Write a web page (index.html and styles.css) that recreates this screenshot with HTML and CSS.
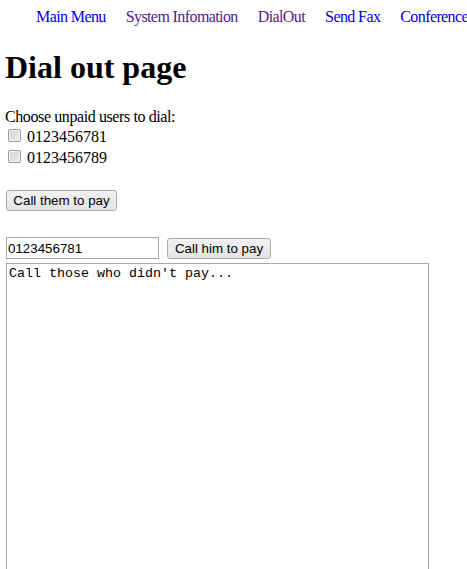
FILE: index.html
```html
<!DOCTYPE html>
<html>
<head>
<meta charset="utf-8">
<title>Dial out page</title>
<link rel="stylesheet" href="styles.css">
</head>
<body>
<nav class="nav">
  <a class="nav-link" href="#">Main Menu</a>
  <a class="nav-link visited" href="#">System Infomation</a>
  <a class="nav-link visited" href="#">DialOut</a>
  <a class="nav-link" href="#">Send Fax</a>
  <a class="nav-link" href="#">Conference</a>
</nav>
<h1 class="title">Dial out page</h1>
<form class="form">
  <div class="prompt">Choose unpaid users to dial:</div>
  <label class="row"><input class="check" type="checkbox"><span class="num">0123456781</span></label>
  <label class="row"><input class="check" type="checkbox"><span class="num">0123456789</span></label>
  <div class="btn-line"><button type="button" class="btn btn-them">Call them to pay</button></div>
  <div class="single">
    <input class="field" type="text" value="0123456781">
    <button type="button" class="btn btn-him">Call him to pay</button>
  </div>
  <textarea class="log">Call those who didn't pay...</textarea>
</form>
</body>
</html>
```
FILE: styles.css
```css
html, body {
  margin: 0;
  padding: 0;
  background: #fff;
  overflow: hidden;
}
body {
  padding-left: 5px;
  font-family: "Liberation Serif", "Times New Roman", serif;
  font-size: 16px;
  color: #000;
}
.nav {
  display: flex;
  gap: 20px;
  padding: 8px 0 0 31px;
  height: 18px;
  line-height: 18px;
  white-space: nowrap;
  overflow: hidden;
  letter-spacing: -0.6px;
}
.nav-link {
  color: #0000ee;
  text-decoration: none;
  flex: none;
}
.nav-link.visited {
  color: #551a8b;
}
.title {
  margin: 23px 0 0 0;
  font-size: 32px;
  line-height: 37px;
  font-weight: bold;
}
.form {
  margin: 21px 0 0 0;
  display: flex;
  flex-direction: column;
  align-items: flex-start;
}
.prompt {
  height: 20px;
  line-height: 20px;
  letter-spacing: -0.4px;
}
.row {
  display: flex;
  align-items: center;
  height: 20px;
  line-height: 20px;
}
.row + .row { margin-top: 1px; }
.check {
  -webkit-appearance: none;
  appearance: none;
  box-sizing: border-box;
  width: 13px;
  height: 13px;
  margin: 0 6px 0 3px;
  border: 1px solid #9a9a9a;
  border-radius: 2px;
  background: linear-gradient(135deg, #d4d4d4, #ececec);
  box-shadow: inset 0 0 0 1px #f4f4f4;
  position: relative;
  top: -2px;
}
.num {
  display: block;
}
.btn-line {
  margin-top: 22px;
}
.btn {
  box-sizing: border-box;
  height: 21px;
  margin: 0 0 0 1px;
  padding: 0 5px;
  font-family: "Liberation Sans", Arial, sans-serif;
  font-size: 13.33px;
  color: #000;
  border: 1px solid #acacac;
  border-radius: 3px;
  background: linear-gradient(#f2f2f2, #e3e3e3);
}
.btn-them { width: 111px; }
.btn-him { width: 104px; margin-left: 8px; }
.single {
  display: flex;
  align-items: center;
  margin-top: 26px;
}
.field {
  box-sizing: border-box;
  width: 153px;
  height: 22px;
  margin: 0 0 0 1px;
  padding: 1px 1px;
  border: 1px solid #a9a9a9;
  font-family: "Liberation Sans", Arial, sans-serif;
  font-size: 13.33px;
  color: #000;
}
.log {
  box-sizing: border-box;
  display: block;
  width: 423px;
  height: 340px;
  margin: 4px 0 0 1px;
  padding: 2px;
  border: 1px solid #a9a9a9;
  font-family: "Liberation Mono", "Courier New", monospace;
  font-size: 13.33px;
  line-height: 15px;
  resize: none;
  color: #000;
}
```
